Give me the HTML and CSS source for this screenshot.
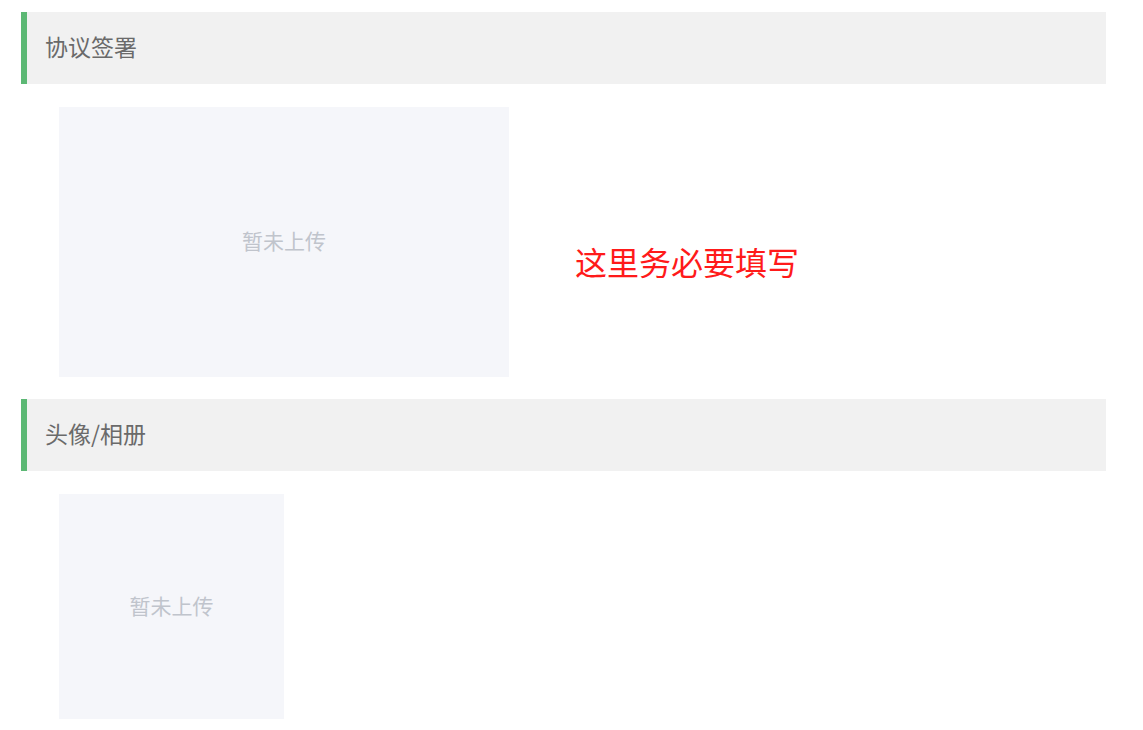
FILE: index.html
```html
<!DOCTYPE html>
<html lang="zh">
<head>
<meta charset="utf-8">
<link rel="stylesheet" href="styles.css">
</head>
<body>
<div class="page">
  <section class="section">
    <div class="section-title">协议签署</div>
    <div class="section-body">
      <div class="placeholder placeholder-wide">暂未上传</div>
      <div class="notice">这里务必要填写</div>
    </div>
  </section>
  <section class="section">
    <div class="section-title">头像/相册</div>
    <div class="section-body">
      <div class="placeholder placeholder-square">暂未上传</div>
    </div>
  </section>
</div>
</body>
</html>
```
FILE: styles.css
```css
html, body {
  margin: 0;
  padding: 0;
  background: #ffffff;
}
body {
  font-family: "Noto Sans CJK SC", "Noto Sans", sans-serif;
}
.page {
  padding: 12px 37px 0 21px;
}
.section-title {
  box-sizing: border-box;
  height: 72px;
  display: flex;
  align-items: center;
  background: #f1f1f1;
  border-left: 6px solid #5cb874;
  padding: 0 0 4px 18px;
  font-size: 23px;
  color: #6a6a6a;
}
.section-body {
  display: flex;
  align-items: center;
  padding: 23px 0 22px 38px;
}
.placeholder {
  box-sizing: border-box;
  background: #f5f6fa;
  color: #c0c4cc;
  font-size: 21px;
  display: flex;
  align-items: center;
  justify-content: center;
  padding-bottom: 4px;
}
.placeholder-wide {
  width: 450px;
  height: 270px;
}
.placeholder-square {
  width: 225px;
  height: 225px;
}
.notice {
  margin-left: 66px;
  margin-top: 38px;
  font-size: 32px;
  line-height: 32px;
  color: #ff1a1a;
}
```
